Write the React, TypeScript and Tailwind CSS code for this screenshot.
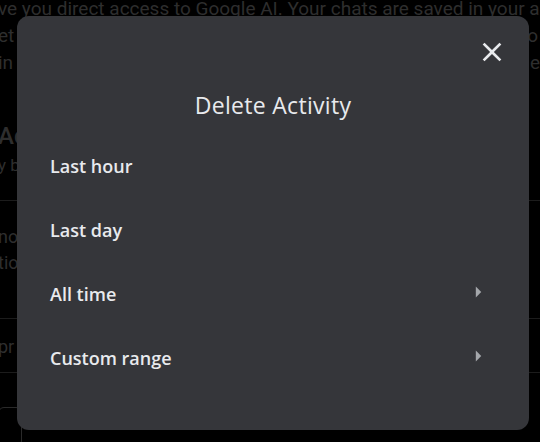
import React from "react";

const options = [
	{ label: "Last hour", more: false },
	{ label: "Last day", more: false },
	{ label: "All time", more: true },
	{ label: "Custom range", more: true },
];

function CloseIcon() {
	return (
		<svg width="32" height="32" viewBox="0 0 24 24" fill="#e8eaed">
			<path d="M19 6.41L17.59 5 12 10.59 6.41 5 5 6.41 10.59 12 5 17.59 6.41 19 12 13.41 17.59 19 19 17.59 13.41 12z" />
		</svg>
	);
}

function ArrowRight() {
	return (
		<svg width="26" height="26" viewBox="0 0 24 24" fill="#a4a7ab">
			<path d="M10 17l5-5-5-5v10z" />
		</svg>
	);
}

export default function App() {
	return (
		<div
			className="relative w-[540px] h-[442px] overflow-hidden bg-black text-[#2e2e2e]"
			style={{ fontFamily: "Roboto, 'Liberation Sans', sans-serif" }}
		>
			{/* page behind the dialog */}
			<div className="flex flex-col -ml-[2px] text-[19px] leading-[27px] whitespace-nowrap">
				<p className="-mt-[5px]">ve you direct access to Google AI. Your chats are saved in your account</p>
				<div className="flex justify-between pr-[2px]">
					<span>et a copy of your activity history</span>
					<span>o</span>
				</div>
				<div className="flex justify-between">
					<span>in your settings and review them</span>
					<span>e</span>
				</div>
				<div className="mt-[46px] text-[24px] font-medium leading-[28px]">Activity</div>
				<div className="mt-[3px] text-[17px] leading-[24px]">y by date</div>
				<div className="mt-[23px] h-px bg-[#1c1c1c]" />
				<div className="mt-[23px] text-[18px] leading-[26px]">
					<p>no activity</p>
					<p>tions</p>
				</div>
				<div className="mt-[42px] h-px bg-[#1c1c1c]" />
				<p className="mt-[15px] text-[18px] leading-[26px]">pr</p>
				<div className="mt-[12px] h-px bg-[#1c1c1c]" />
				<div className="mt-[34px] h-[40px] w-[24px] rounded-[6px] border border-[#2a2a2a]" />
			</div>

			{/* dialog */}
			<div
				className="absolute left-[17px] top-[16px] w-[512px] h-[414px] rounded-[12px] bg-[#35363a] text-[#e8eaed] flex flex-col"
				style={{ fontFamily: "'Open Sans', Roboto, sans-serif" }}
			>
				<div className="flex justify-end pt-[20px] pr-[21px] h-[52px]">
					<CloseIcon />
				</div>
				<h2 className="mt-[23px] text-center text-[23px] leading-[28px] font-normal tracking-[0.3px]">Delete Activity</h2>
				<ul className="mt-[16px] flex flex-col">
					{options.map((o) => (
						<li key={o.label} className="flex items-center justify-between h-[64px] pl-[33px] pr-[38px]">
							<span className="-mt-[2px] text-[18px] font-semibold">{o.label}</span>
							{o.more && (
								<span className="-mt-[6px]">
									<ArrowRight />
								</span>
							)}
						</li>
					))}
				</ul>
			</div>
		</div>
	);
}
